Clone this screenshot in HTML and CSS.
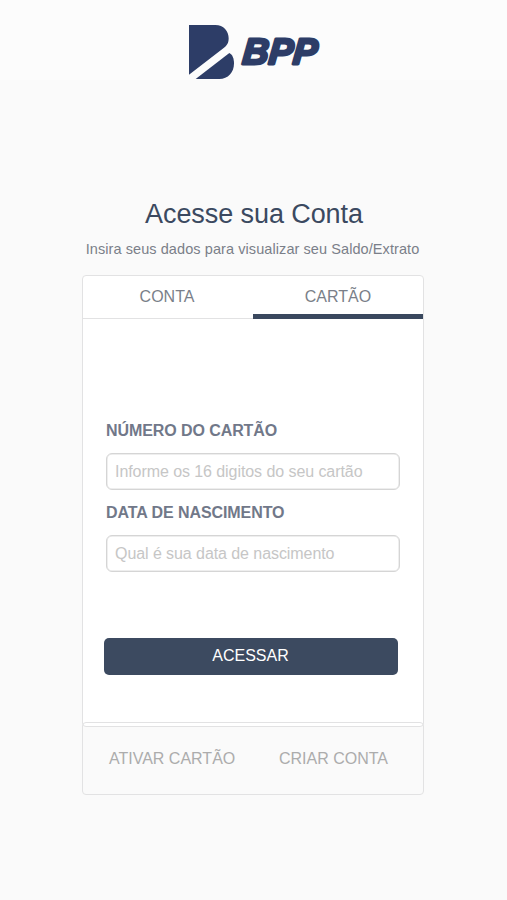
FILE: index.html
```html
<!DOCTYPE html>
<html lang="pt-BR">
<head>
<meta charset="utf-8">
<meta name="viewport" content="width=device-width, initial-scale=1">
<title>BPP - Acesse sua Conta</title>
<link rel="stylesheet" href="styles.css">
</head>
<body>
<header class="header">
  <svg class="mark" viewBox="0 0 135 162" aria-hidden="true">
    <path d="M0 0H79C104 0 119 18 119 40C119 53 115 61 104 69L0 149Z"/>
    <path d="M20 162L121 84C130 88 135 101 135 115C135 143 117 162 91 162Z"/>
  </svg>
  <svg class="brand" viewBox="0 0 90 54" role="img" aria-label="BPP">
    <text transform="translate(7.8 38.5) skewX(-5)" textLength="74.5" lengthAdjust="spacingAndGlyphs">BPP</text>
  </svg>
</header>
<main class="main">
  <h1 class="title">Acesse sua Conta</h1>
  <p class="subtitle">Insira seus dados para visualizar seu Saldo/Extrato</p>
  <section class="card">
    <nav class="tabs">
      <a class="tab">CONTA</a>
      <a class="tab tab-active">CARTÃO</a>
    </nav>
    <form class="form">
      <label class="label" for="numero">NÚMERO DO CARTÃO</label>
      <input class="field" id="numero" type="text" placeholder="Informe os 16 digitos do seu cartão">
      <label class="label" for="data">DATA DE NASCIMENTO</label>
      <input class="field" id="data" type="text" placeholder="Qual é sua data de nascimento">
      <button class="submit" type="button">ACESSAR</button>
    </form>
  </section>
  <footer class="links">
    <a class="link">ATIVAR CARTÃO</a>
    <a class="link">CRIAR CONTA</a>
  </footer>
</main>
</body>
</html>
```
FILE: styles.css
```css
* { box-sizing: border-box; }
body {
  margin: 0;
  height: 900px;
  overflow: hidden;
  background: #fafafa;
  color: #7a7f89;
  font-family: "Liberation Sans", Arial, sans-serif;
}
.header {
  height: 80px;
  padding: 25px 0 0 189px;
  display: flex;
  background: #fcfcfc;
}
.mark { width: 45px; height: 54px; fill: #2d3d67; flex: none; }
.brand {
  width: 90px;
  height: 54px;
  flex: none;
  fill: #2d3d67;
  stroke: #2d3d67;
  stroke-width: 2.8;
  stroke-linejoin: round;
  font: italic 700 36.5px "Liberation Sans", Arial, sans-serif;
}
.main { width: 342px; margin: 118px 0 0 82px; }
.title {
  margin: 0;
  padding-left: 2px;
  height: 32px;
  line-height: 33px;
  color: #3b4960;
  font-size: 27px;
  font-weight: 400;
  text-align: center;
  letter-spacing: -0.08px;
  white-space: nowrap;
}
.subtitle {
  margin: 9px 0 0;
  height: 20px;
  padding-right: 1px;
  line-height: 20px;
  font-size: 14.5px;
  letter-spacing: 0.08px;
  text-align: center;
  white-space: nowrap;
}
.card {
  margin-top: 16px;
  height: 452px;
  background: #fff;
  border: 1px solid #e2e2e3;
  border-radius: 4px;
}
.tabs {
  height: 43px;
  display: grid;
  grid-template-columns: 1fr 1fr;
  border-bottom: 1px solid #e2e2e3;
}
.tab {
  height: 43px;
  padding-right: 2px;
  line-height: 42px;
  font-size: 16px;
  text-align: center;
}
.tab-active { padding: 0; border-bottom: 5px solid #3a485e; }
.form {
  padding: 102px 23px 0;
  display: flex;
  flex-direction: column;
}
.label {
  height: 20px;
  margin-bottom: 12px;
  line-height: 20px;
  color: #717889;
  font-size: 16px;
  font-weight: 700;
  letter-spacing: -0.08px;
}
.field {
  width: 294px;
  height: 37px;
  margin: 0 0 13px;
  padding: 0 8px;
  border: 1px solid #d5d5d5;
  box-shadow: inset 0 0 0 0.5px #dedede;
  border-radius: 6px;
  background: #fff;
  font: 16px "Liberation Sans", Arial, sans-serif;
  letter-spacing: -0.07px;
}
.field::placeholder { color: #c6c6c6; opacity: 1; }
.submit {
  width: 294px;
  height: 37px;
  margin: 52.5px 0 0 -2.5px;
  padding: 0;
  border: 0;
  border-radius: 5px;
  background: #3c4a60;
  color: #fff;
  font: 16px "Liberation Sans", Arial, sans-serif;
}
.links {
  height: 73px;
  margin-top: -5px;
  padding: 0 35px 0 26px;
  display: flex;
  justify-content: space-between;
  align-items: center;
  border: 1px solid #e2e2e3;
  border-radius: 4px;
}
.link { color: #acacac; font-size: 16px; }
```
